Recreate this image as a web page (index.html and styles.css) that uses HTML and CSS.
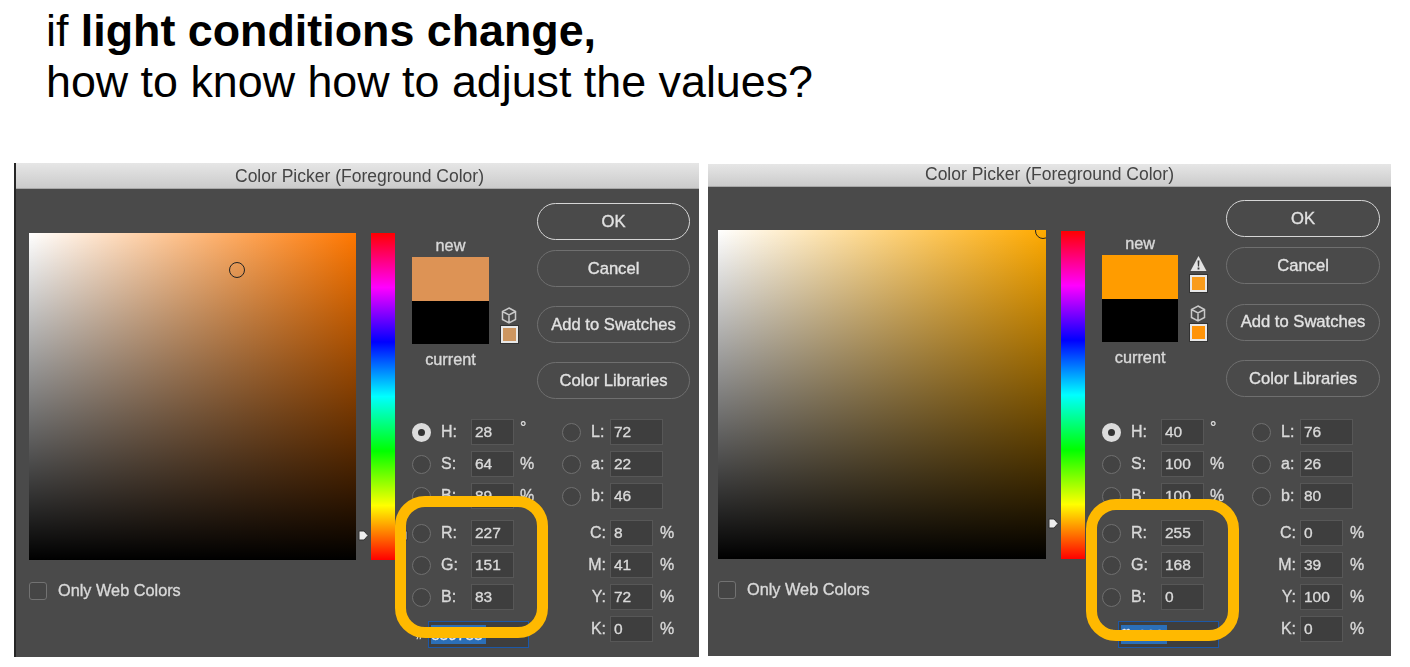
FILE: index.html
```html
<!DOCTYPE html>
<html lang="en">
<head>
    <meta charset="UTF-8">
    <title>Light conditions</title>
    <link rel="stylesheet" href="styles.css">
</head>
<body>
    <h1 class="headline">if <strong>light conditions change,</strong><br>how to know how to adjust the values?</h1>

    <div class="dialogs">
        <!-- first picker -->
        <section class="dialog dialog-a">
            <div class="titlebar">Color Picker (Foreground Color)</div>
            <div class="dialog-body">
                <div class="field-col">
                    <div class="square">
                        <span class="picker" style="left: 208px; top: 37px"></span>
                    </div>
                    <label class="web-colors"><span class="checkbox"></span>Only Web Colors</label>
                </div>
                <div class="hue">
                    <svg class="arrow arrow-l" style="top: 297px" width="11" height="11" viewBox="0 0 11 11"><path d="M1 1h5l4 4.5-4 4.5H1z" fill="#eee" stroke="#333"/></svg>
                    <svg class="arrow arrow-r" style="top: 297px" width="11" height="11" viewBox="0 0 11 11"><path d="M10 1H5L1 5.5 5 10h5z" fill="#eee" stroke="#333"/></svg>
                </div>
                <div class="controls">
                    <div class="top-row">
                        <div class="compare">
                            <div class="compare-label">new</div>
                            <div class="chip chip-new"></div>
                            <div class="chip chip-current"></div>
                            <div class="compare-label">current</div>
                        </div>
                        <div class="gamut">
                            <svg class="cube" width="16" height="17" viewBox="0 0 16 17"><path d="M8 1l6.500 3.500v8L8 16l-6.500-3.500v-8zM1.500 4.500L8 8l6.500-3.500M8 8v8" fill="none" stroke="#c9c9c9" stroke-width="1.500"/></svg>
                            <span class="mini mini-web"></span>
                        </div>
                        <div class="buttons">
                            <button class="btn btn-ok">OK</button>
                            <button class="btn">Cancel</button>
                            <button class="btn btn-gap">Add to Swatches</button>
                            <button class="btn btn-gap">Color Libraries</button>
                        </div>
                    </div>
                    <div class="fields">
                        <div class="stack stack-left">
                            <div class="group">
                                <div class="row"><span class="radio radio-on"></span><span class="lbl">H:</span><span class="val">28</span><span class="unit unit-deg">°</span></div>
                                <div class="row"><span class="radio"></span><span class="lbl">S:</span><span class="val">64</span><span class="unit">%</span></div>
                                <div class="row"><span class="radio"></span><span class="lbl">B:</span><span class="val">89</span><span class="unit">%</span></div>
                            </div>
                            <div class="group">
                                <div class="row"><span class="radio"></span><span class="lbl">R:</span><span class="val">227</span></div>
                                <div class="row"><span class="radio"></span><span class="lbl">G:</span><span class="val">151</span></div>
                                <div class="row"><span class="radio"></span><span class="lbl">B:</span><span class="val">83</span></div>
                            </div>
                            <div class="hash-row"><span class="hash">#</span><span class="hex"><span class="hex-sel">e39753</span></span></div>
                        </div>
                        <div class="stack">
                            <div class="group">
                                <div class="row"><span class="radio"></span><span class="lbl lbl-lab">L:</span><span class="val val-wide">72</span></div>
                                <div class="row"><span class="radio"></span><span class="lbl lbl-lab">a:</span><span class="val val-wide">22</span></div>
                                <div class="row"><span class="radio"></span><span class="lbl lbl-lab">b:</span><span class="val val-wide">46</span></div>
                            </div>
                            <div class="group">
                                <div class="row"><span class="lbl lbl-cmyk">C:</span><span class="val">8</span><span class="unit unit-cmyk">%</span></div>
                                <div class="row"><span class="lbl lbl-cmyk">M:</span><span class="val">41</span><span class="unit unit-cmyk">%</span></div>
                                <div class="row"><span class="lbl lbl-cmyk">Y:</span><span class="val">72</span><span class="unit unit-cmyk">%</span></div>
                                <div class="row"><span class="lbl lbl-cmyk">K:</span><span class="val">0</span><span class="unit unit-cmyk">%</span></div>
                            </div>
                        </div>
                    </div>
                </div>
            </div>
            <div class="highlight"></div>
        </section>

        <!-- second picker -->
        <section class="dialog dialog-b">
            <div class="titlebar">Color Picker (Foreground Color)</div>
            <div class="dialog-body">
                <div class="field-col">
                    <div class="square">
                        <span class="picker" style="left: 325px; top: 1px"></span>
                    </div>
                    <label class="web-colors"><span class="checkbox"></span>Only Web Colors</label>
                </div>
                <div class="hue">
                    <svg class="arrow arrow-l" style="top: 287px" width="11" height="11" viewBox="0 0 11 11"><path d="M1 1h5l4 4.5-4 4.5H1z" fill="#eee" stroke="#333"/></svg>
                    <svg class="arrow arrow-r" style="top: 287px" width="11" height="11" viewBox="0 0 11 11"><path d="M10 1H5L1 5.5 5 10h5z" fill="#eee" stroke="#333"/></svg>
                </div>
                <div class="controls">
                    <div class="top-row">
                        <div class="compare">
                            <div class="compare-label">new</div>
                            <div class="chip chip-new"></div>
                            <div class="chip chip-current"></div>
                            <div class="compare-label">current</div>
                        </div>
                        <div class="gamut">
                            <svg class="warn" width="17" height="17" viewBox="0 0 17 17"><path d="M8.500 1L16.500 16H.5z" fill="#e2e2e2"/><path d="M7.600 5.500h1.800l-.3 6h-1.200zM7.600 12.500h1.800v2H7.600z" fill="#3a3a3a"/></svg>
                            <span class="mini mini-gamut"></span>
                            <svg class="cube cube-low" width="16" height="17" viewBox="0 0 16 17"><path d="M8 1l6.500 3.500v8L8 16l-6.500-3.500v-8zM1.500 4.500L8 8l6.500-3.500M8 8v8" fill="none" stroke="#c9c9c9" stroke-width="1.500"/></svg>
                            <span class="mini mini-web"></span>
                        </div>
                        <div class="buttons">
                            <button class="btn btn-ok">OK</button>
                            <button class="btn">Cancel</button>
                            <button class="btn btn-gap">Add to Swatches</button>
                            <button class="btn btn-gap">Color Libraries</button>
                        </div>
                    </div>
                    <div class="fields">
                        <div class="stack stack-left">
                            <div class="group">
                                <div class="row"><span class="radio radio-on"></span><span class="lbl">H:</span><span class="val">40</span><span class="unit unit-deg">°</span></div>
                                <div class="row"><span class="radio"></span><span class="lbl">S:</span><span class="val">100</span><span class="unit">%</span></div>
                                <div class="row"><span class="radio"></span><span class="lbl">B:</span><span class="val">100</span><span class="unit">%</span></div>
                            </div>
                            <div class="group">
                                <div class="row"><span class="radio"></span><span class="lbl">R:</span><span class="val">255</span></div>
                                <div class="row"><span class="radio"></span><span class="lbl">G:</span><span class="val">168</span></div>
                                <div class="row"><span class="radio"></span><span class="lbl">B:</span><span class="val">0</span></div>
                            </div>
                            <div class="hash-row"><span class="hash">#</span><span class="hex"><span class="hex-sel">ffa800</span></span></div>
                        </div>
                        <div class="stack">
                            <div class="group">
                                <div class="row"><span class="radio"></span><span class="lbl lbl-lab">L:</span><span class="val val-wide">76</span></div>
                                <div class="row"><span class="radio"></span><span class="lbl lbl-lab">a:</span><span class="val val-wide">26</span></div>
                                <div class="row"><span class="radio"></span><span class="lbl lbl-lab">b:</span><span class="val val-wide">80</span></div>
                            </div>
                            <div class="group">
                                <div class="row"><span class="lbl lbl-cmyk">C:</span><span class="val">0</span><span class="unit unit-cmyk">%</span></div>
                                <div class="row"><span class="lbl lbl-cmyk">M:</span><span class="val">39</span><span class="unit unit-cmyk">%</span></div>
                                <div class="row"><span class="lbl lbl-cmyk">Y:</span><span class="val">100</span><span class="unit unit-cmyk">%</span></div>
                                <div class="row"><span class="lbl lbl-cmyk">K:</span><span class="val">0</span><span class="unit unit-cmyk">%</span></div>
                            </div>
                        </div>
                    </div>
                </div>
            </div>
            <div class="highlight"></div>
        </section>
    </div>
</body>
</html>
```

FILE: styles.css
```css
/* Page */
body {
    margin: 0;
    background-color: #fff;
    font-family: "Liberation Sans", Arial, sans-serif;
    overflow: hidden;
}

.headline {
    margin: 5px 0 56px 46px;
    font-size: 44.8px;
    font-weight: 400;
    line-height: 51px;
    color: #000;
}

.dialogs {
    display: flex;
    align-items: flex-start;
    gap: 9px;
    padding-left: 14px;
}

/* Dialog window */
.dialog {
    position: relative;
    box-sizing: border-box;
    background-color: #4a4a4a;
    color: #d9d9d9;
    font-size: 16px;
    overflow: hidden;
    filter: blur(0.3px);
    -webkit-text-stroke: 0.35px;
}

.dialog-a {
    width: 685px;
    height: 494px;
    border-left: 2px solid #262626;
}

.dialog-b {
    width: 683px;
    height: 492px;
    margin-top: 1px;
}

.titlebar {
    box-sizing: border-box;
    height: 26px;
    background: linear-gradient(#e6e6e6, #cbcbcb);
    border-bottom: 1px solid #a8a8a8;
    color: #444;
    font-size: 17.5px;
    line-height: 26px;
    text-align: center;
    -webkit-text-stroke: 0;
}

.dialog-a .titlebar {
    padding-left: 4px;
}

.dialog-b .titlebar {
    height: 23px;
    line-height: 20px;
}

.dialog-body {
    display: flex;
    padding-left: 13px;
}

.dialog-b .dialog-body {
    padding-left: 10px;
    margin-top: -1px;
}

/* Colour field */
.field-col {
    width: 327px;
    padding-top: 44px;
}

.dialog-b .field-col {
    width: 328px;
}

.square {
    position: relative;
    height: 327px;
    overflow: hidden;
}

.dialog-b .square {
    height: 329px;
}

.dialog-a .square {
    background: linear-gradient(transparent, #000), linear-gradient(to right, #fff, #ff7700);
}

.dialog-b .square {
    background: linear-gradient(transparent, #000), linear-gradient(to right, #fff, #ffaa00);
}

.picker {
    position: absolute;
    width: 16px;
    height: 16px;
    margin: -8px 0 0 -8px;
    box-sizing: border-box;
    border: 1.5px solid #222;
    border-radius: 50%;
}

.web-colors {
    display: flex;
    align-items: center;
    margin-top: 21px;
    font-size: 16.3px;
}

.checkbox {
    box-sizing: border-box;
    width: 18px;
    height: 18px;
    margin-right: 11px;
    background-color: #454545;
    border: 1.5px solid #727272;
    border-radius: 3px;
}

/* Hue strip */
.hue {
    position: relative;
    flex: none;
    width: 24px;
    height: 327px;
    margin: 44px 17px 0 15px;
    background: linear-gradient(#f00, #f0f 16.67%, #00f 33.33%, #0ff 50%, #0f0 66.67%, #ff0 83.33%, #f00);
}

.dialog-b .hue {
    height: 328px;
    margin-top: 45px;
}

.arrow {
    position: absolute;
}

.arrow-l {
    left: -13px;
}

.arrow-r {
    right: -13px;
}

/* Right hand controls */
.controls {
    width: 278px;
    padding-top: 14px;
}

.top-row {
    display: flex;
}

.compare {
    width: 77px;
    padding-top: 35px;
}

.dialog-b .compare {
    padding-top: 36px;
}

.compare-label {
    height: 19px;
    line-height: 15px;
    font-size: 16.3px;
    text-align: center;
}

.compare-label:last-child {
    padding-top: 7px;
    line-height: 17px;
}

.chip {
    height: 43.5px;
}

.dialog-a .chip-new {
    background-color: #dd9355;
}

.dialog-b .chip-new {
    background-color: #ff9c00;
}

.chip-current {
    background-color: #000;
}

.gamut {
    display: flex;
    flex-direction: column;
    justify-content: flex-end;
    align-items: flex-start;
    width: 36px;
    height: 87px;
    margin-top: 54px;
    padding-left: 12px;
}

.dialog-b .gamut {
    margin-top: 55px;
}

.cube {
    margin-bottom: 2px;
}

.warn {
    margin-bottom: 3px;
}

.cube-low {
    margin-top: auto;
}

.mini {
    box-sizing: border-box;
    width: 17px;
    height: 17px;
    margin-bottom: 1px;
    border: 2px solid #e8e8e8;
    box-shadow: 0 0 0 1px #333;
}

.dialog-a .mini-web {
    background-color: #cd9660;
}

.dialog-b .mini-web {
    background-color: #ff9408;
}

.mini-gamut {
    background-color: #f99c1c;
}

.buttons {
    display: flex;
    flex-direction: column;
    flex: none;
    width: 153px;
}

.dialog-b .buttons {
    width: 154px;
}

.btn {
    box-sizing: border-box;
    height: 37px;
    margin-bottom: 10px;
    padding: 0;
    background: none;
    border: 1.5px solid #6f6f6f;
    border-radius: 19px;
    color: #e2e2e2;
    font-family: inherit;
    font-size: 16.6px;
    -webkit-text-stroke: 0.35px;
}

.btn-ok {
    border-color: #d6d6d6;
}

.btn-gap {
    margin-top: 9px;
}

.dialog-b .btn-gap {
    margin-top: 9.5px;
}

/* Numeric fields */
.fields {
    display: flex;
    margin-top: 10px;
}

.dialog-b .fields {
    margin-top: 12px;
}

.stack {
    display: flex;
    flex-direction: column;
    gap: 11px;
}

.stack-left {
    width: 150px;
}

.group {
    display: flex;
    flex-direction: column;
    gap: 6px;
}

.row {
    display: flex;
    align-items: center;
    height: 26px;
}

.radio {
    box-sizing: border-box;
    width: 19px;
    height: 19px;
    margin-right: 10px;
    background-color: #434343;
    border: 1.5px solid #6f6f6f;
    border-radius: 50%;
}

.radio-on {
    background-color: #333;
    border: 6px solid #dcdcdc;
}

.lbl {
    width: 30px;
}

.lbl-lab {
    width: 19px;
}

.lbl-cmyk {
    width: 44px;
    margin-right: 4px;
    text-align: right;
}

.val {
    box-sizing: border-box;
    width: 43px;
    height: 26px;
    padding-left: 3px;
    background-color: #3e3e3e;
    border: 1px solid #575757;
    font-size: 15.5px;
    line-height: 23px;
}

.val-wide {
    width: 53px;
}

.unit {
    margin-left: 6px;
}

.unit-deg {
    margin-top: -8px;
}

.unit-cmyk {
    margin-left: 7px;
}

.hash-row {
    display: flex;
    align-items: center;
    height: 27px;
}

.hash {
    box-sizing: border-box;
    width: 16px;
    padding-left: 4px;
    font-size: 13px;
}

.hex {
    box-sizing: border-box;
    width: 101px;
    height: 27px;
    padding: 3px 2px;
    background-color: #3e3e3e;
    border: 1px solid #1c58a8;
}

.hex-sel {
    display: block;
    width: 55px;
    height: 19px;
    background-color: #2b6fb8;
    color: #e8e8e8;
    font-size: 15.5px;
    line-height: 19px;
}

.dialog-b .hex-sel {
    width: 46px;
}

/* Orange marker drawn over the RGB rows */
.highlight {
    position: absolute;
    box-sizing: border-box;
    width: 153px;
    height: 142px;
    border: 11px solid #ffb900;
    border-radius: 30px;
}

.dialog-a .highlight {
    left: 379px;
    top: 333px;
}

.dialog-b .highlight {
    left: 378px;
    top: 335px;
}
```
